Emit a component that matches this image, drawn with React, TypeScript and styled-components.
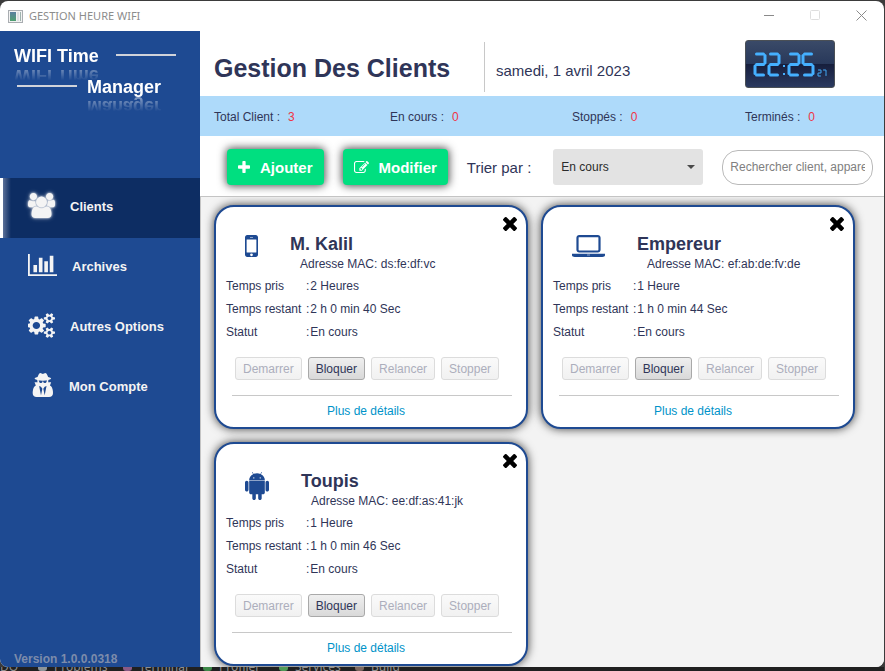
import React from "react";
import styled, { createGlobalStyle, css } from "styled-components";

const navy = "#1e4a92";
const ink = "#2f3558";

const GlobalStyle = createGlobalStyle`
  * { box-sizing: border-box; }
  body {
    margin: 0;
    background: #202020;
    color: ${ink};
    font-family: "Liberation Sans", Arial, sans-serif;
    font-size: 12px;
    overflow: hidden;
  }
  button, input, select { font: inherit; color: inherit; }
  button { cursor: pointer; }
  h1, h2, p, dl, dd, dt { margin: 0; }
  svg { display: block; }
`;

/* ---------- icons ---------- */

type IconDef = { box: string; d: string };

const icons: Record<string, IconDef> = {
  users: {
    box: "0 0 1920 1792",
    d: "M593 896q-162 5-265 128h-134q-82 0-138-40.5t-56-118.5q0-353 124-353 6 0 43.5 21t97.5 42.5 119 21.5q67 0 133-23-5 37-5 66 0 159 93 287zm1071 637q0 120-73 189.5t-194 69.5h-874q-121 0-194-69.5t-73-189.5q0-53 3.5-103.5t14-109 26.5-108.5 43-97.5 62-81 85.5-53.5 111.5-20q10 0 43 21.5t73 48 107 48 135 21.5 135-21.5 107-48 73-48 43-21.5q61 0 111.5 20t85.5 53.5 62 81 43 97.5 26.5 108.5 14 109 3.5 103.5zm-1024-1277q0 106-75 181t-181 75-181-75-75-181 75-181 181-75 181 75 75 181zm704 384q0 159-112.5 271.5t-271.5 112.5-271.5-112.5-112.5-271.5 112.5-271.5 271.5-112.5 271.5 112.5 112.5 271.5zm576 225q0 78-56 118.5t-138 40.5h-134q-103-123-265-128 93-128 93-287 0-29-5-66 66 23 133 23 59 0 119-21.5t97.5-42.5 43.5-21q124 0 124 353zm-128-609q0 106-75 181t-181 75-181-75-75-181 75-181 181-75 181 75 75 181z",
  },
  chart: {
    box: "0 128 2048 1536",
    d: "M640 896v512h-256v-512h256zm384-512v1024h-256v-1024h256zm1024 1152v128h-2048v-1536h128v1408h1920zm-640-896v768h-256v-768h256zm384-384v1152h-256v-1152h256z",
  },
  cogs: {
    box: "0 0 1856 1792",
    d: "M832 896q0-106-75-181t-181-75-181 75-75 181 75 181 181 75 181-75 75-181zm768 512q0-52-38-90t-90-38-90 38-38 90q0 53 37.5 90.5t90.5 37.5 90.5-37.5 37.5-90.5zm0-1024q0-52-38-90t-90-38-90 38-38 90q0 53 37.5 90.5t90.5 37.5 90.5-37.5 37.5-90.5zm-384 421v185q0 10-7 19.5t-16 10.5l-155 24q-11 35-32 76 34 48 90 115 7 11 7 20 0 12-7 19-23 30-82.5 89.5t-78.5 59.5q-11 0-21-7l-115-90q-37 19-77 31-11 108-23 155-7 24-30 24h-186q-11 0-20-7.5t-10-17.5l-23-153q-34-10-75-31l-118 89q-7 7-20 7-11 0-21-8-144-133-144-160 0-9 7-19 10-14 41-53t47-61q-23-44-35-82l-152-24q-10-1-17-9.5t-7-19.5v-185q0-10 7-19.5t16-10.5l155-24q11-35 32-76-34-48-90-115-7-11-7-20 0-12 7-20 22-30 82-89t79-59q11 0 21 7l115 90q34-18 77-32 11-108 23-154 7-24 30-24h186q11 0 20 7.5t10 17.5l23 153q34 10 75 31l118-89q8-7 20-7 11 0 21 8 144 133 144 160 0 8-7 19-12 16-42 54t-45 60q23 48 34 82l152 23q10 2 17 10.5t7 19.5zm640 533v140q0 16-149 31-12 27-30 52 51 113 51 138 0 4-4 7-122 71-124 71-8 0-46-47t-52-68q-20 2-30 2t-30-2q-14 21-52 68t-46 47q-2 0-124-71-4-3-4-7 0-25 51-138-18-25-30-52-149-15-149-31v-140q0-16 149-31 13-29 30-52-51-113-51-138 0-4 4-7 4-2 35-20t59-34 30-16q8 0 46 46.5t52 67.5q20-2 30-2t30 2q51-71 92-112l6-2q4 0 124 70 4 3 4 7 0 25-51 138 17 23 30 52 149 15 149 31zm0-1024v140q0 16-149 31-12 27-30 52 51 113 51 138 0 4-4 7-122 71-124 71-8 0-46-47t-52-68q-20 2-30 2t-30-2q-14 21-52 68t-46 47q-2 0-124-71-4-3-4-7 0-25 51-138-18-25-30-52-149-15-149-31v-140q0-16 149-31 13-29 30-52-51-113-51-138 0-4 4-7 4-2 35-20t59-34 30-16q8 0 46 46.5t52 67.5q20-2 30-2t30 2q51-71 92-112l6-2q4 0 124 70 4 3 4 7 0 25-51 138 17 23 30 52 149 15 149 31z",
  },
  agent: {
    box: "-325 0 1803 1664",
    d: "M576 1536l96-448-96-128-128-64zm256 0l128-640-128 64-96 128zm160-1010q-2-4-4-6-10-8-96-8-70 0-167 19-7 2-21 2t-21-2q-97-19-167-19-86 0-96 8-2 2-4 6 2 18 4 27 2 3 7.5 6.5t7.5 10.5q2 4 7.5 20.5t7 20.5 7.5 17 8.5 17 9 14 12 13.5 14 9.5 17.5 8 20.5 4 24.5 2q36 0 59-12.5t32.5-30 14.5-34.5 11.5-29.5 17.5-12.5h12q11 0 17.5 12.5t11.5 29.5 14.5 34.5 32.5 30 59 12.5q13 0 24.5-2t20.5-4 17.5-8 14-9.5 12-13.5 9-14 8.5-17 7.5-17 7-20.5 7.5-20.5q2-7 7.5-10.5t7.5-6.5q2-9 4-27zm416 879q0 121-73 190t-194 69h-874q-121 0-194-69t-73-190q0-61 4.5-118t19-125.5 37.5-123.5 63.5-103.5 93.5-74.5l-90-220h214q-22-64-22-128 0-12 2-32-194-40-194-96 0-57 210-99 17-62 51.5-134t70.5-114q32-37 76-37 30 0 84 31t84 31 84-31 84-31q44 0 76 37 36 42 70.5 114t51.5 134q210 42 210 99 0 56-194 96 7 81-20 160h214l-82 225q63 33 107.5 96.5t65.5 143.5 29 151.5 8 148.5z",
  },
  plus: {
    box: "192 128 1408 1408",
    d: "M1600 736v192q0 40-28 68t-68 28h-416v416q0 40-28 68t-68 28h-192q-40 0-68-28t-28-68v-416h-416q-40 0-68-28t-28-68v-192q0-40 28-68t68-28h416v-416q0-40 28-68t68-28h192q40 0 68 28t28 68v416h416q40 0 68 28t28 68z",
  },
  edit: {
    box: "0 128 1792 1408",
    d: "M888 1184l116-116-152-152-116 116v56h96v96h56zm440-720q-16-16-33 1l-350 350q-17 17-1 33t33-1l350-350q17-17 1-33zm80 594v190q0 119-84.5 203.5t-203.5 84.5h-832q-119 0-203.5-84.5t-84.5-203.5v-832q0-119 84.5-203.5t203.5-84.5h832q63 0 117 25 15 7 18 23 3 17-9 29l-49 49q-14 14-32 8-23-6-45-6h-832q-66 0-113 47t-47 113v832q0 66 47 113t113 47h832q66 0 113-47t47-113v-126q0-13 9-22l64-64q15-15 35-7t20 29zm-96-738l288 288-672 672h-288v-288zm444 132l-92 92-288-288 92-92q28-28 68-28t68 28l152 152q28 28 28 68t-28 68z",
  },
  close: {
    box: "302 366 1188 1188",
    d: "M1490 1322q0 40-28 68l-136 136q-28 28-68 28t-68-28l-294-294-294 294q-28 28-68 28t-68-28l-136-136q-28-28-28-68t28-68l294-294-294-294q-28-28-28-68t28-68l136-136q28-28 68-28t68 28l294 294 294-294q28-28 68-28t68 28l136 136q28 28 28 68t-28 68l-294 294 294 294q28 28 28 68z",
  },
  phone: {
    box: "512 256 768 1280",
    d: "M976 1408q0-33-23.5-56.5t-56.5-23.5-56.5 23.5-23.5 56.5 23.5 56.5 56.5 23.5 56.5-23.5 23.5-56.5zm208-160v-704q0-13-9.5-22.5t-22.5-9.5h-512q-13 0-22.5 9.5t-9.5 22.5v704q0 13 9.5 22.5t22.5 9.5h512q13 0 22.5-9.5t9.5-22.5zm-192-848q0-16-16-16h-160q-16 0-16 16t16 16h160q16 0 16-16zm288-16v1024q0 52-38 90t-90 38h-512q-52 0-90-38t-38-90v-1024q0-52 38-90t90-38h512q52 0 90 38t38 90z",
  },
  laptop: {
    box: "0 128 1920 1280",
    d: "M416 1152q-66 0-113-47t-47-113v-704q0-66 47-113t113-47h1088q66 0 113 47t47 113v704q0 66-47 113t-113 47h-1088zm-32-864v704q0 13 9.5 22.5t22.5 9.5h1088q13 0 22.5-9.5t9.5-22.5v-704q0-13-9.5-22.5t-22.5-9.5h-1088q-13 0-22.5 9.5t-9.5 22.5zm1376 928h160v96q0 40-47 68t-113 28h-1600q-66 0-113-28t-47-68v-96h1760zm-720 96q16 0 16-16t-16-16h-160q-16 0-16 16t16 16h160z",
  },
  android: {
    box: "192 100 1408 1700",
    d: "M709 484q16 0 27-11t11-27-11.5-27-26.5-11-26.5 11-11.5 27 11 27 27 11zm375 0q15 0 26.5-11t11.5-27-11.5-27-26.5-11q-16 0-27 11t-11 27 11 27 27 11zm-789 128q42 0 72 30t30 72v430q0 43-29.5 73t-72.5 30-73-30-30-73v-430q0-42 30-72t73-30zm1060 19v666q0 46-32 78t-77 32h-75v227q0 43-30 73t-73 30-73-30-30-73v-227h-138v227q0 43-30 73t-73 30q-42 0-72-30t-30-73l-1-227h-74q-46 0-78-32t-32-78v-666h918zm-232-405q107 55 171 153.5t64 215.5h-925q0-117 64-215.5t172-153.5l-71-131q-7-13 5-20 13-6 20 6l72 132q95-42 201-42t201 42l72-132q7-12 20-6 12 7 5 20zm477 488v430q0 43-30 73t-73 30q-42 0-72-30t-30-73v-430q0-43 30-72.5t72-29.5q43 0 73 29.5t30 72.5z",
  },
};

const Glyph = styled.svg<{ $glow?: boolean }>`
  flex: none;
  fill: currentColor;
  ${(p) => p.$glow && css`filter: drop-shadow(0 0 1px rgba(255, 255, 255, 0.9)) drop-shadow(0 0 2px rgba(255, 255, 255, 0.4));`}
`;

const Icon = ({ name, w, h, glow }: { name: string; w: number; h: number; glow?: boolean }) => (
  <Glyph viewBox={icons[name].box} width={w} height={h} $glow={glow} preserveAspectRatio="none" aria-hidden="true">
    <path d={icons[name].d} />
  </Glyph>
);

/* ---------- window frame ---------- */

const Desktop = styled.div`
  display: flex;
  flex-direction: column;
  height: 100vh;
  padding: 1px 1px 0 0;
  background: #3b3b3b;
`;

const AppWindow = styled.div`
  flex: 1;
  min-height: 0;
  display: flex;
  flex-direction: column;
  overflow: hidden;
  border-radius: 8px;
  background: #fff;
`;

const TitleBar = styled.header`
  flex: none;
  display: flex;
  align-items: center;
  height: 30px;
  padding-left: 8px;
  color: #8c8c8c;
  font-family: "Noto Sans", "Open Sans", sans-serif;
`;

const WindowTitle = styled.span`
  flex: 1;
  padding-left: 6px;
  font-size: 11px;
  line-height: 16px;
`;

const FrameButton = styled.button`
  display: grid;
  place-items: center;
  width: 46px;
  height: 30px;
  padding: 0 0 2px;
  border: 0;
  background: none;
  color: #8a8a8a;
  &:disabled { color: #dedede; }
`;

const Body = styled.div`
  flex: 1;
  min-height: 0;
  display: flex;
`;

const DockBar = styled.footer`
  flex: none;
  display: flex;
  align-items: flex-end;
  height: 4px;
  overflow: hidden;
  background: #202020;
  color: #8f8f8f;
  font-family: "Noto Sans", "Open Sans", sans-serif;
  font-size: 12px;
  line-height: 8px;
`;

const DockItem = styled.span<{ $tint: string; $w: number }>`
  display: flex;
  align-items: flex-end;
  gap: 7px;
  flex: 0 0 ${(p) => p.$w}px;
  &::before {
    content: "";
    width: 9px;
    height: 4px;
    border-radius: 0 0 3px 3px;
    background: ${(p) => p.$tint};
  }
  &:first-child::before { display: none; }
`;

/* ---------- sidebar ---------- */

const Sidebar = styled.aside`
  flex: 0 0 200px;
  display: flex;
  flex-direction: column;
  background: ${navy};
  color: #fff;
`;

const Brand = styled.div`
  height: 147px;
  padding: 14px 24px 0 14px;
  font-size: 18px;
  font-weight: bold;
  line-height: 22px;
`;

const BrandRow = styled.div<{ $end?: boolean }>`
  display: flex;
  align-items: center;
  justify-content: space-between;
  height: 31px;
  padding: ${(p) => (p.$end ? "0 15px 9px 3px" : "0 0 9px")};
`;

const BrandWord = styled.span`
  -webkit-box-reflect: below -2px linear-gradient(transparent 30%, rgba(255, 255, 255, 0.5));
`;

const BrandRule = styled.i`
  width: 60px;
  height: 2px;
  margin-bottom: 2px;
  background: #d0d3da;
`;

const NavLink = styled.a<{ $active?: boolean }>`
  display: flex;
  align-items: center;
  gap: 15px;
  height: 60px;
  padding: 0 12px 6px 28px;
  color: #f4f4f4;
  font-size: 13px;
  font-weight: bold;
  text-decoration: none;
  ${(p) =>
    p.$active &&
    css`
      background: linear-gradient(90deg, #5b7098, #0d2d63 8px) #0d2d63;
      border-left: 3px solid #fff;
      padding-left: 25px;
    `}
`;

const NavText = styled.span`
  padding-top: 3px;
`;

const Version = styled.p`
  margin-top: auto;
  padding: 0 14px;
  color: #7d8cab;
  font-weight: bold;
  line-height: 16px;
`;

/* ---------- main column ---------- */

const Main = styled.main`
  flex: 1;
  min-width: 0;
  display: flex;
  flex-direction: column;
`;

const Header = styled.div`
  flex: none;
  display: flex;
  align-items: center;
  height: 65px;
  padding: 0 49px 0 14px;
`;

const PageTitle = styled.h1`
  flex: 0 0 270px;
  padding-top: 8px;
  font-size: 25px;
  line-height: 30px;
`;

const Today = styled.p`
  flex: 1;
  height: 50px;
  margin-top: 7px;
  padding: 20px 0 0 11px;
  border-left: 1px solid #c8c8c8;
  font-size: 15px;
  line-height: 18px;
`;

const Clock = styled.div`
  width: 90px;
  height: 48px;
  border: 1px solid #4a4f55;
  border-radius: 3px;
  background: linear-gradient(#3a4a68, #28385a 50%, #161e3c 50%, #2b3a60);
`;

const Stats = styled.dl`
  flex: none;
  display: grid;
  grid-template-columns: 176fr 182fr 173fr 139fr;
  align-items: center;
  height: 40px;
  padding: 2px 0 0 14px;
  background: #aedafa;
`;

const Stat = styled.div`
  display: flex;
  gap: 8px;
  dd { color: #f03545; }
`;

const Toolbar = styled.div`
  flex: none;
  display: flex;
  align-items: center;
  gap: 19px;
  height: 60px;
  padding: 2px 11px 0 27px;
`;

const ActionButton = styled.button`
  display: flex;
  align-items: center;
  gap: 10px;
  height: 36px;
  padding: 0 11px;
  border: 0;
  border-radius: 4px;
  background: #00df80;
  box-shadow: 0 0 8px 1px rgba(0, 0, 0, 0.7);
  color: #fff;
  font-size: 15px;
  font-weight: bold;
  white-space: nowrap;
`;

const SortLabel = styled.label`
  display: flex;
  align-items: center;
  gap: 22px;
  font-size: 15px;
  white-space: nowrap;
`;

const SelectBox = styled.span`
  position: relative;
  display: block;
  font-size: 12px;
  svg {
    position: absolute;
    right: 8px;
    top: 16px;
    pointer-events: none;
  }
`;

const Select = styled.select`
  display: block;
  appearance: none;
  width: 150px;
  height: 36px;
  padding: 0 8px;
  border: 0;
  border-radius: 3px;
  background: #e3e3e3;
  color: #2b2b2b;
`;

const Search = styled.input`
  flex: 1;
  min-width: 0;
  height: 35px;
  padding: 0 7px;
  border: 1px solid #b9b9b9;
  border-radius: 16px;
  background: #fff;
  &::placeholder { color: #808080; opacity: 1; }
`;

const Board = styled.section`
  flex: 1;
  min-height: 0;
  display: flex;
  flex-wrap: wrap;
  align-content: flex-start;
  gap: 13px;
  padding: 8px 13px;
  overflow: hidden;
  border-top: 1px solid #c4c4c4;
  border-left: 1px solid #c4c4c4;
  background: #f3f3f3;
`;

const Card = styled.article`
  flex: 0 0 314px;
  padding: 10px 9px 8px 10px;
  border: 2px solid ${navy};
  border-radius: 20px;
  background: #fff;
  box-shadow: 0 0 10px rgba(0, 0, 0, 0.75);
`;

const CloseButton = styled.button`
  display: block;
  margin-left: auto;
  padding: 0;
  border: 0;
  background: none;
  color: #000;
`;

const CardHead = styled.div`
  display: flex;
  gap: 32px;
  height: 43px;
  padding: 4px 0 0 19px;
  color: ${navy};
`;

const Identity = styled.div`
  color: ${ink};
  h2 { font-size: 18px; line-height: 18px; }
  p { padding-left: 10px; line-height: 22px; }
`;

const Details = styled.dl`
  div { display: flex; height: 23px; align-items: center; }
  dt { flex: 0 0 80px; }
  dd { display: flex; gap: 1px; white-space: nowrap; }
`;

const Actions = styled.div`
  display: flex;
  gap: 6px;
  margin-top: 14px;
  padding-left: 9px;
`;

const SmallButton = styled.button`
  height: 23px;
  padding: 0 7px;
  border: 1px solid #a9a9a9;
  border-radius: 3px;
  background: linear-gradient(#efefef, #d9d9d9);
  &:disabled {
    border-color: #dcdcdc;
    background: linear-gradient(#fafafa, #f1f1f1);
    color: #acaebc;
  }
`;

const More = styled.div`
  margin: 15px 5px 0 6px;
  padding: 7px 12px 0 0;
  border-top: 1px solid #c8c8c8;
  text-align: center;
  line-height: 16px;
  a { color: #0093c9; text-decoration: none; }
`;

/* ---------- seven-segment clock ---------- */

const lit: Record<string, string> = {
  "0": "abcdef", "1": "bc", "2": "abged", "3": "abgcd", "4": "fgbc",
  "5": "afgcd", "6": "afgecd", "7": "abc", "8": "abcdefg", "9": "abcdfg",
};

const Digit = ({ value, x, y, w, h, t }: { value: string; x: number; y: number; w: number; h: number; t: number }) => {
  const m = y + h / 2;
  const r = x + w;
  const b = y + h;
  const g = t / 2;
  const bars: Record<string, number[]> = {
    a: [x + g, y, r - g, y],
    b: [r, y + g, r, m - g],
    c: [r, m + g, r, b - g],
    d: [x + g, b, r - g, b],
    e: [x, m + g, x, b - g],
    f: [x, y + g, x, m - g],
    g: [x + g, m, r - g, m],
  };
  return (
    <g stroke="#45b0ff" strokeWidth={t} strokeLinecap="round">
      {lit[value].split("").map((s) => {
        const [x1, y1, x2, y2] = bars[s];
        return <line key={s} x1={x1} y1={y1} x2={x2} y2={y2} />;
      })}
    </g>
  );
};

const ClockFace = () => (
  <Clock role="img" aria-label="22:25:27">
    <svg width="88" height="46" viewBox="0 0 88 46" aria-hidden="true">
      <Digit value="2" x={9} y={13} w={10} h={21} t={3} />
      <Digit value="2" x={23} y={13} w={10} h={21} t={3} />
      <rect x="37" y="24" width="2" height="2" fill="#45b0ff" />
      <rect x="37" y="32" width="2" height="2" fill="#45b0ff" />
      <Digit value="2" x={43} y={13} w={10} h={21} t={3} />
      <Digit value="5" x={57} y={13} w={10} h={21} t={3} />
      <Digit value="2" x={72} y={29} w={3} h={6} t={1} />
      <Digit value="7" x={77} y={29} w={3} h={6} t={1} />
    </svg>
  </Clock>
);

/* ---------- data ---------- */

const nav = [
  { label: "Clients", icon: "users", w: 27, h: 25 },
  { label: "Archives", icon: "chart", w: 29, h: 22 },
  { label: "Autres Options", icon: "cogs", w: 27, h: 25 },
  { label: "Mon Compte", icon: "agent", w: 26, h: 24 },
];

const stats = [
  { label: "Total Client :", value: 3 },
  { label: "En cours :", value: 0 },
  { label: "Stoppés :", value: 0 },
  { label: "Terminés :", value: 0 },
];

const clients = [
  { name: "M. Kalil", mac: "ds:fe:df:vc", icon: "phone", w: 13, h: 22, taken: "2 Heures", left: "2 h 0 min 40 Sec" },
  { name: "Empereur", mac: "ef:ab:de:fv:de", icon: "laptop", w: 33, h: 22, taken: "1 Heure", left: "1 h 0 min 44 Sec" },
  { name: "Toupis", mac: "ee:df:as:41:jk", icon: "android", w: 24, h: 29, taken: "1 Heure", left: "1 h 0 min 46 Sec" },
];

const dock = [
  { label: "DO", tint: "transparent", w: 38 },
  { label: "Problems", tint: "#8d9499", w: 85 },
  { label: "Terminal", tint: "#8a5a86", w: 80 },
  { label: "Profiler", tint: "#3f8a4a", w: 76 },
  { label: "Services", tint: "#4f9a57", w: 76 },
  { label: "Build", tint: "#7c675f", w: 60 },
];

const ClientCard = ({ client }: { client: (typeof clients)[number] }) => (
  <Card>
    <CloseButton aria-label={`Supprimer ${client.name}`}>
      <Icon name="close" w={14} h={14} />
    </CloseButton>
    <CardHead>
      <Icon name={client.icon} w={client.w} h={client.h} />
      <Identity>
        <h2>{client.name}</h2>
        <p>Adresse MAC: {client.mac}</p>
      </Identity>
    </CardHead>
    <Details>
      {[
        ["Temps pris", client.taken],
        ["Temps restant", client.left],
        ["Statut", "En cours"],
      ].map(([label, value]) => (
        <div key={label}>
          <dt>{label}</dt>
          <dd><span>:</span><span>{value}</span></dd>
        </div>
      ))}
    </Details>
    <Actions>
      <SmallButton disabled>Demarrer</SmallButton>
      <SmallButton>Bloquer</SmallButton>
      <SmallButton disabled>Relancer</SmallButton>
      <SmallButton disabled>Stopper</SmallButton>
    </Actions>
    <More><a href="#details">Plus de détails</a></More>
  </Card>
);

export default function App() {
  return (
    <>
      <GlobalStyle />
      <Desktop>
        <AppWindow>
          <TitleBar>
            <svg width="15" height="13" viewBox="0 0 15 13" aria-hidden="true">
              <defs>
                <linearGradient id="pane" x1="0" y1="0" x2="0" y2="1">
                  <stop offset="0" stopColor="#5a7fa0" />
                  <stop offset="1" stopColor="#4f9f70" />
                </linearGradient>
              </defs>
              <rect x="0.5" y="0.5" width="14" height="12" fill="#f2f2f2" stroke="#a9adb1" />
              <rect x="2" y="2" width="6" height="9" fill="url(#pane)" />
              <rect x="9" y="2" width="2" height="9" fill="#dcdfe1" />
              <rect x="12" y="2" width="1" height="9" fill="#9fb3ae" />
            </svg>
            <WindowTitle>GESTION HEURE WIFI</WindowTitle>
            <FrameButton aria-label="Réduire">
              <svg width="10" height="10"><path d="M0 5.5h10" stroke="currentColor" /></svg>
            </FrameButton>
            <FrameButton aria-label="Agrandir" disabled>
              <svg width="10" height="10"><rect x="0.5" y="0.5" width="9" height="9" rx="1" fill="none" stroke="currentColor" /></svg>
            </FrameButton>
            <FrameButton aria-label="Fermer">
              <svg width="11" height="11"><path d="M.5 .5l10 10M10.500 .5l-10 10" stroke="currentColor" /></svg>
            </FrameButton>
          </TitleBar>
          <Body>
            <Sidebar>
              <Brand>
                <BrandRow><BrandWord>WIFI Time</BrandWord><BrandRule /></BrandRow>
                <BrandRow $end><BrandRule /><BrandWord>Manager</BrandWord></BrandRow>
              </Brand>
              <nav>
                {nav.map((n, i) => (
                  <NavLink key={n.label} href={`#${n.icon}`} $active={i === 0}>
                    <Icon name={n.icon} w={n.w} h={n.h} glow={i === 0} />
                    <NavText>{n.label}</NavText>
                  </NavLink>
                ))}
              </nav>
              <Version>Version 1.0.0.0318</Version>
            </Sidebar>
            <Main>
              <Header>
                <PageTitle>Gestion Des Clients</PageTitle>
                <Today>samedi, 1 avril 2023</Today>
                <ClockFace />
              </Header>
              <Stats>
                {stats.map((s) => (
                  <Stat key={s.label}><dt>{s.label}</dt><dd>{s.value}</dd></Stat>
                ))}
              </Stats>
              <Toolbar>
                <ActionButton><Icon name="plus" w={12} h={12} />Ajouter</ActionButton>
                <ActionButton><Icon name="edit" w={15} h={12} />Modifier</ActionButton>
                <SortLabel>
                  Trier par :
                  <SelectBox>
                    <Select defaultValue="En cours">
                      <option>En cours</option>
                      <option>Stoppés</option>
                      <option>Terminés</option>
                    </Select>
                    <svg width="8" height="4" aria-hidden="true"><path d="M0 0h8l-4 4z" fill="#4a4a4a" /></svg>
                  </SelectBox>
                </SortLabel>
                <Search aria-label="Rechercher" placeholder="Rechercher client, appareil" />
              </Toolbar>
              <Board>
                {clients.map((c) => <ClientCard key={c.name} client={c} />)}
              </Board>
            </Main>
          </Body>
        </AppWindow>
        <DockBar>
          {dock.map((d) => <DockItem key={d.label} $tint={d.tint} $w={d.w}>{d.label}</DockItem>)}
        </DockBar>
      </Desktop>
    </>
  );
}
